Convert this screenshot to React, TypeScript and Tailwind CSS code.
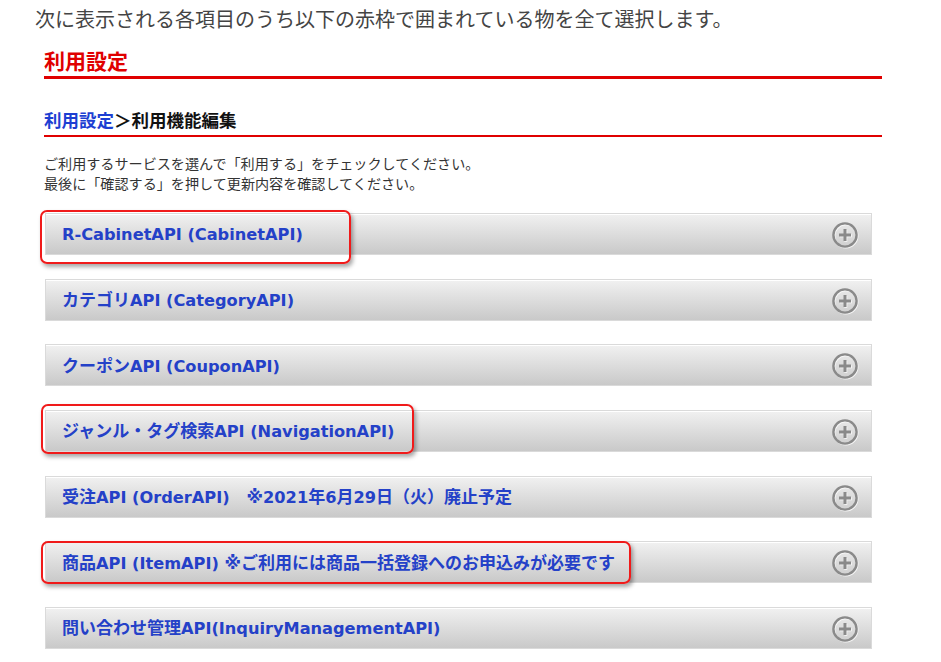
import React from "react";

type Row = {
  label: string;
  hl?: { left: number; top: number; width: number; height: number };
};

const rows: Row[] = [
  { label: "R-CabinetAPI (CabinetAPI)", hl: { left: -6, top: -4, width: 311, height: 54 } },
  { label: "カテゴリAPI (CategoryAPI)" },
  { label: "クーポンAPI (CouponAPI)" },
  { label: "ジャンル・タグ検索API (NavigationAPI)", hl: { left: -5, top: -7, width: 373, height: 50 } },
  { label: "受注API (OrderAPI)　※2021年6月29日（火）廃止予定" },
  { label: "商品API (ItemAPI) ※ご利用には商品一括登録へのお申込みが必要です", hl: { left: -5, top: -1, width: 590, height: 43 } },
  { label: "問い合わせ管理API(InquiryManagementAPI)" },
];

function Label({ text }: { text: string }) {
  const parts = text.split(/([\u3000-\u30ff\u4e00-\u9fff\uff00-\uffef\u203b]+)/);
  return (
    <span className="font-['DejaVu_Sans','Noto_Sans_CJK_JP',sans-serif] font-bold text-[16.2px] text-[#2441c8] whitespace-nowrap">
      {parts.map((p, i) =>
        /[\u3000-\u30ff\u4e00-\u9fff\uff00-\uffef\u203b]/.test(p) ? (
          <span key={i} className="text-[17px]">
            {p}
          </span>
        ) : (
          <span key={i}>{p}</span>
        )
      )}
    </span>
  );
}

function PlusIcon() {
  return (
    <svg width="28" height="28" viewBox="0 0 28 28" className="shrink-0">
      <g stroke="#ffffff" strokeOpacity="0.8" fill="none">
        <circle cx="14.8" cy="14.8" r="11.6" strokeWidth="2.2" />
        <line x1="8.8" y1="14.8" x2="20.8" y2="14.8" strokeWidth="3" />
        <line x1="14.8" y1="8.8" x2="14.8" y2="20.8" strokeWidth="3" />
      </g>
      <g stroke="#8a8a8a" fill="none">
        <circle cx="14" cy="14" r="11.6" strokeWidth="2.4" />
        <line x1="8" y1="14" x2="20" y2="14" strokeWidth="3" />
        <line x1="14" y1="8" x2="14" y2="20" strokeWidth="3" />
      </g>
    </svg>
  );
}

export default function App() {
  return (
    <div className="w-[941px] h-[662px] overflow-hidden bg-white font-['Noto_Sans_CJK_JP',sans-serif]">
      <p className="pl-[35px] pt-[5px] text-[20px] leading-[28px] text-[#444] font-normal whitespace-nowrap">
        次に表示される各項目のうち以下の赤枠で囲まれている物を全て選択します。
      </p>
      <div className="ml-[44px] w-[838px]">
        <h1 className="mt-[13px] pb-[2px] border-b-[3px] border-[#e00000] text-[21px] leading-[28px] font-bold text-[#e00000]">
          利用設定
        </h1>
        <h2 className="mt-[29px] pb-[3px] border-b-2 border-[#e00000] text-[17.5px] leading-[24px] font-bold text-[#111]">
          <span className="text-[#1d3fd2]">利用設定</span>＞利用機能編集
        </h2>
        <div className="mt-[16px] text-[14.1px] leading-[20px] text-[#333] whitespace-nowrap">
          <p>ご利用するサービスを選んで「利用する」をチェックしてください。</p>
          <p>最後に「確認する」を押して更新内容を確認してください。</p>
        </div>
        <div className="mt-[20px] ml-[1px] w-[827px] flex flex-col gap-[23.7px]">
          {rows.map((r, i) => (
            <div
              key={i}
              className="relative h-[42px] flex items-center justify-between pl-[16px] pr-[12px] pt-[2px] border border-[#dadada] bg-gradient-to-b from-[#f1f1f1] to-[#c9c9c9] shadow-[inset_0_1px_0_#ffffff]"
            >
              <Label text={r.label} />
              <PlusIcon />
              {r.hl && (
                <div
                  className="absolute border-2 border-[#f01a1a] rounded-[7px] shadow-[2px_3px_4px_rgba(0,0,0,0.35)] pointer-events-none"
                  style={{ left: r.hl.left, top: r.hl.top, width: r.hl.width, height: r.hl.height }}
                />
              )}
            </div>
          ))}
        </div>
      </div>
    </div>
  );
}
